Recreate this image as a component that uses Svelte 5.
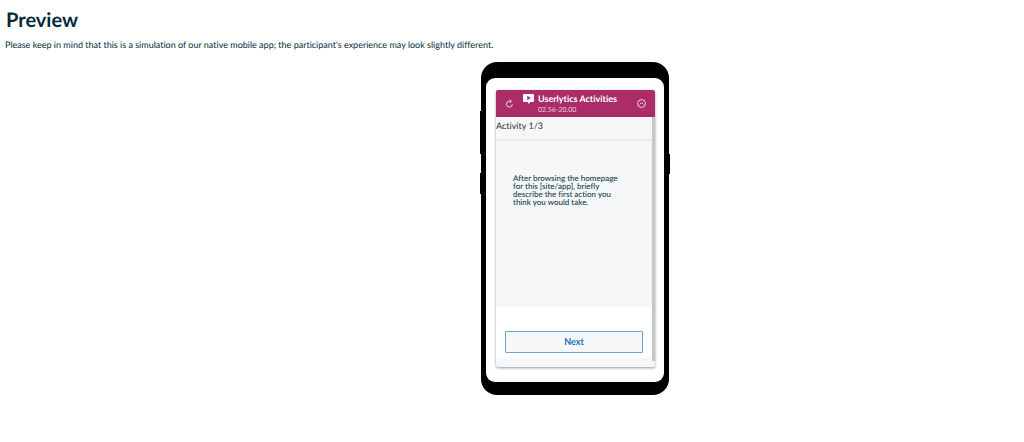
<script lang="ts">
  const activity = {
    current: 1,
    total: 3,
    elapsed: '02.56-20.00',
    prompt:
      'After browsing the homepage for this [site/app], briefly describe the first action you think you would take.',
  };
</script>

<main class="preview">
  <h1>Preview</h1>
  <p class="note">
    Please keep in mind that this is a simulation of our native mobile app; the participant's
    experience may look slightly different.
  </p>

  <div class="stage">
    <div class="phone">
      <span class="key volume"></span>
      <span class="key assistant"></span>
      <span class="key power"></span>

      <div class="screen">
        <section class="app">
          <header class="app-header">
            <button class="icon-button" type="button" aria-label="Restart">
              <svg class="icon" viewBox="0 0 16 16" fill="none" stroke="currentColor" stroke-width="1.700">
                <path d="M10.500 4H7.500A5.200 5.200 0 1 0 13 9.500" />
                <path d="M8.500 1 11.500 4 8.500 7" />
              </svg>
            </button>
            <div class="brand">
              <svg class="logo" viewBox="0 0 22 20" aria-hidden="true">
                <path
                  fill="currentColor"
                  fill-rule="evenodd"
                  d="M2 0h18a2 2 0 0 1 2 2v12a2 2 0 0 1-2 2h-5l-4 4-1-4H2a2 2 0 0 1-2-2V2a2 2 0 0 1 2-2ZM8.500 3.500v9l7-4.500Z"
                />
              </svg>
              <div>
                <div class="title">Userlytics Activities</div>
                <div class="time">{activity.elapsed}</div>
              </div>
            </div>
            <button class="icon-button" type="button" aria-label="Collapse">
              <svg class="icon" viewBox="0 0 16 16" fill="none" stroke="currentColor" stroke-width="1.700">
                <circle cx="8" cy="8" r="7" />
                <path d="m4.500 9.500 3.500-3 3.500 3" />
              </svg>
            </button>
          </header>

          <div class="body">
            <div class="content">
              <h2>Activity {activity.current}/{activity.total}</h2>
              <div class="task">
                <p>{activity.prompt}</p>
              </div>
              <div class="actions">
                <button class="next" type="button">Next</button>
              </div>
              <div class="content-end"></div>
            </div>
            <div class="scrollbar"></div>
          </div>
          <div class="app-footer"></div>
        </section>
      </div>
    </div>
  </div>
</main>

<style>
  :global(body) {
    margin: 0;
    background: #fff;
  }

  .preview {
    padding: 8px 0 0;
    font-family: Lato, 'Open Sans', sans-serif;
    font-variant-ligatures: none;
    text-rendering: geometricPrecision;
    color: #062a3b;
  }

  h1 {
    margin: 0 6px;
    font-size: 20px;
    line-height: 24px;
    font-weight: 700;
  }

  .note {
    margin: 7px 5px 0;
    font-size: 9px;
    line-height: 12px;
  }

  .stage {
    display: flex;
    justify-content: center;
    padding: 11px 0 24px 126px;
  }

  .phone {
    position: relative;
    box-sizing: border-box;
    width: 188px;
    padding: 16px 5px 13px;
    border-radius: 16px;
    background: #000;
  }

  /* hardware keys stick out over the edge of the frame */
  .key {
    position: absolute;
    width: 2px;
    background: #000;
  }

  .volume {
    top: 49px;
    left: -1px;
    height: 43px;
  }

  .assistant {
    top: 111px;
    left: -1px;
    height: 21px;
  }

  .power {
    top: 92px;
    right: -1px;
    height: 20px;
  }

  .screen {
    padding: 12px 9px 15px 10px;
    border-radius: 9px;
    background: #fff;
  }

  .app {
    border-radius: 2px;
    background: #f5f7f9;
    box-shadow: 0 1px 3px rgba(0, 0, 0, 0.4);
  }

  .app-header {
    display: flex;
    align-items: center;
    justify-content: space-between;
    box-sizing: border-box;
    height: 27px;
    padding: 0 9px;
    border-radius: 2px 2px 0 0;
    background: #aa2c68;
    color: #fff;
  }

  .icon-button {
    display: flex;
    padding: 0;
    border: 0;
    background: none;
    color: #f2dae6;
  }

  .icon {
    width: 9px;
    height: 9px;
  }

  .brand {
    display: flex;
    flex: 1;
    gap: 4px;
    margin-left: 9px;
  }

  .logo {
    width: 11px;
    height: 10px;
    margin-top: 1px;
  }

  .title {
    font-size: 9px;
    line-height: 12px;
    font-weight: 700;
  }

  .time {
    font-size: 7px;
    line-height: 10px;
    color: #eccadb;
  }

  .body {
    display: flex;
  }

  .content {
    flex: 1;
  }

  h2 {
    margin: 0;
    padding: 2px 0 6px;
    border-bottom: 2px solid #e8eaeb;
    font-size: 9px;
    line-height: 14px;
    font-weight: 400;
    color: #333;
  }

  .task {
    box-sizing: border-box;
    min-height: 166px;
    padding: 33px 24px 0 17px;
    border-right: 1px solid #eef0f2;
  }

  .task p {
    margin: 0;
    font-size: 8px;
    line-height: 8px;
    font-weight: 500;
    color: #20404f;
  }

  .actions {
    padding: 24px 9px 5px;
    background: #fff;
  }

  .next {
    display: block;
    box-sizing: border-box;
    width: 100%;
    height: 22px;
    padding: 0;
    border: 1px solid #64a6d3;
    border-radius: 1px;
    background: #f5f7f9;
    font: 700 9px/20px Lato, sans-serif;
    color: #1674b8;
  }

  .content-end {
    height: 3px;
  }

  .scrollbar {
    width: 3px;
    background: #c6c7c9;
  }

  .app-footer {
    height: 6px;
  }
</style>
